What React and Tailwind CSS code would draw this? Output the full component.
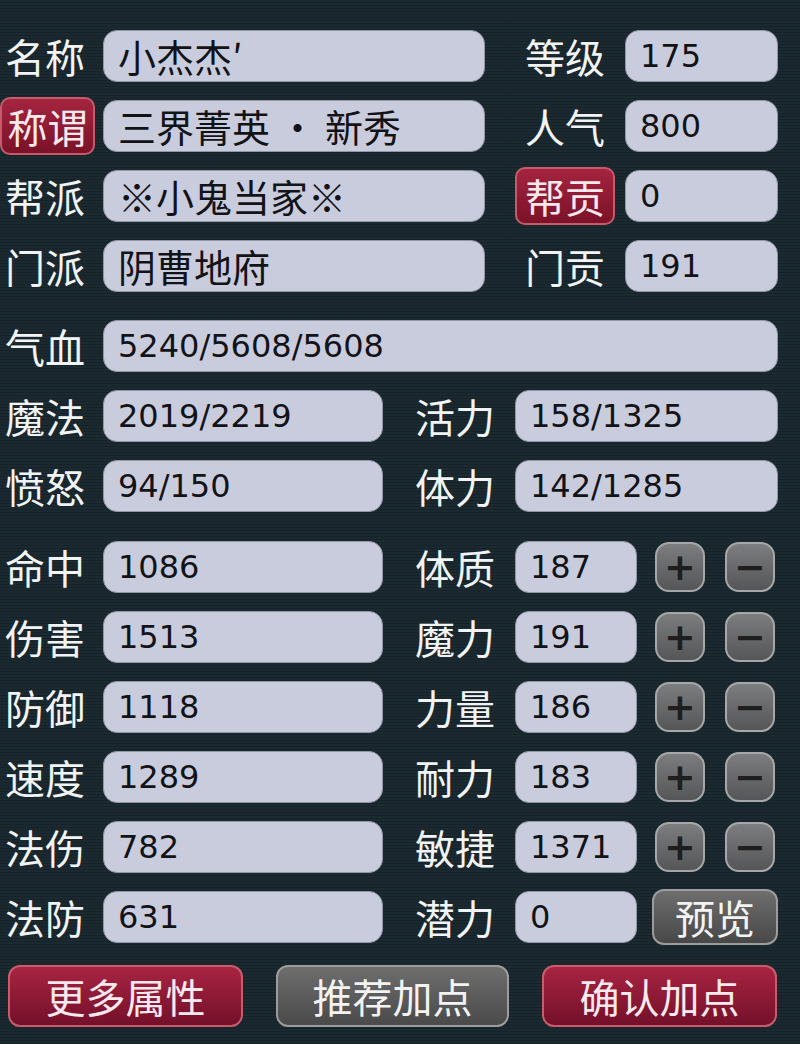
import React from 'react'

const cjk = { fontFamily: '"Noto Sans CJK SC", "Noto Sans", sans-serif' }
const num = { fontFamily: '"DejaVu Sans", "Noto Sans CJK SC", sans-serif' }

function Label({ text, className = '' }) {
  return (
    <div className={`text-[40px] leading-none text-[#f1f3f4] whitespace-nowrap ${className}`} style={cjk}>
      {text}
    </div>
  )
}

function Badge({ text, className = '' }) {
  return (
    <div
      className={`flex items-center justify-center h-[58px] rounded-[10px] border-2 border-[#c65a6a] bg-gradient-to-b from-[#a52440] to-[#7a1228] text-[40px] leading-none text-[#fbe8ec] ${className}`}
      style={cjk}
    >
      {text}
    </div>
  )
}

function Field({ value, className = '', zh = false }) {
  return (
    <div
      className={`flex items-center h-[52px] rounded-[14px] border border-[#9297a8] bg-[#c9ccdd] pl-[14px] text-[#121316] whitespace-nowrap ${zh ? 'text-[38px]' : 'text-[32px]'} leading-none ${className}`}
      style={zh ? cjk : num}
    >
      {value}
    </div>
  )
}

function PlusMinus({ sign }) {
  return (
    <div className="flex items-center justify-center w-[50px] h-[50px] rounded-[14px] border-2 border-[#a5a7a8] bg-gradient-to-b from-[#7c7d7e] to-[#545657] text-[38px] leading-none font-bold text-[#1e1e1e]" style={num}>
      {sign}
    </div>
  )
}

function GameButton({ text, red }) {
  return (
    <div
      className={`flex items-center justify-center h-[62px] rounded-[12px] border-2 text-[40px] leading-none ${
        red
          ? 'border-[#c85c6c] bg-gradient-to-b from-[#a82442] to-[#74102a] text-[#fbe9ee]'
          : 'border-[#9c9c9c] bg-gradient-to-b from-[#6e6e6e] to-[#4a4a4a] text-[#f3f3f3]'
      }`}
      style={cjk}
    >
      {text}
    </div>
  )
}

const topRows = [
  { label: '名称', value: '小杰杰′', rLabel: '等级', rValue: '175' },
  { label: '称谓', value: '三界菁英 · 新秀', rLabel: '人气', rValue: '800', badge: true },
  { label: '帮派', value: '※小鬼当家※', rLabel: '帮贡', rValue: '0', rBadge: true },
  { label: '门派', value: '阴曹地府', rLabel: '门贡', rValue: '191' },
]

const statRows = [
  { label: '命中', value: '1086', rLabel: '体质', rValue: '187' },
  { label: '伤害', value: '1513', rLabel: '魔力', rValue: '191' },
  { label: '防御', value: '1118', rLabel: '力量', rValue: '186' },
  { label: '速度', value: '1289', rLabel: '耐力', rValue: '183' },
  { label: '法伤', value: '782', rLabel: '敏捷', rValue: '1371' },
]

export default function App() {
  return (
    <div className="w-[800px] h-[1044px] overflow-hidden bg-[#1b2a31] bg-[repeating-linear-gradient(0deg,rgba(0,0,0,0.18)_0px,rgba(0,0,0,0.18)_1px,transparent_1px,transparent_3px)] pt-[30px]">
      {/* basic info */}
      <div className="flex flex-col gap-[18px]">
        {topRows.map(r => (
          <div key={r.label} className="flex items-center h-[52px]">
            {r.badge ? (
              <Badge text={r.label} className="w-[95px] mr-[3px]" />
            ) : (
              <Label text={r.label} className="w-[98px] pl-[5px]" />
            )}
            <Field value={r.value} zh className="ml-[5px] w-[382px]" />
            {r.rBadge ? (
              <div className="w-[140px] flex justify-start pl-[30px]">
                <Badge text={r.rLabel} className="w-[100px]" />
              </div>
            ) : (
              <div className="w-[140px] flex justify-end pr-[20px]">
                <Label text={r.rLabel} />
              </div>
            )}
            <Field value={r.rValue} className="w-[153px]" />
          </div>
        ))}
      </div>

      {/* hp / mp */}
      <div className="flex flex-col gap-[18px] mt-[28px]">
        <div className="flex items-center h-[52px]">
          <Label text="气血" className="w-[98px] pl-[5px]" />
          <Field value="5240/5608/5608" className="ml-[5px] w-[675px]" />
        </div>
        <div className="flex items-center h-[52px]">
          <Label text="魔法" className="w-[98px] pl-[5px]" />
          <Field value="2019/2219" className="ml-[5px] w-[280px]" />
          <Label text="活力" className="ml-[32px] w-[100px]" />
          <Field value="158/1325" className="w-[263px]" />
        </div>
        <div className="flex items-center h-[52px]">
          <Label text="愤怒" className="w-[98px] pl-[5px]" />
          <Field value="94/150" className="ml-[5px] w-[280px]" />
          <Label text="体力" className="ml-[32px] w-[100px]" />
          <Field value="142/1285" className="w-[263px]" />
        </div>
      </div>

      {/* attributes */}
      <div className="flex flex-col gap-[18px] mt-[29px]">
        {statRows.map(r => (
          <div key={r.label} className="flex items-center h-[52px]">
            <Label text={r.label} className="w-[98px] pl-[5px]" />
            <Field value={r.value} className="ml-[5px] w-[280px]" />
            <Label text={r.rLabel} className="ml-[32px] w-[100px]" />
            <Field value={r.rValue} className="w-[122px]" />
            <div className="ml-[18px] flex gap-[20px]">
              <PlusMinus sign="+" />
              <PlusMinus sign="−" />
            </div>
          </div>
        ))}
        <div className="flex items-center h-[52px]">
          <Label text="法防" className="w-[98px] pl-[5px]" />
          <Field value="631" className="ml-[5px] w-[280px]" />
          <Label text="潜力" className="ml-[32px] w-[100px]" />
          <Field value="0" className="w-[122px]" />
          <div className="ml-[15px] flex items-center justify-center w-[126px] h-[56px] rounded-[12px] border-2 border-[#9c9c9c] bg-gradient-to-b from-[#6e6e6e] to-[#484848] text-[40px] leading-none text-[#f3f3f3]" style={cjk}>
            预览
          </div>
        </div>
      </div>

      {/* actions */}
      <div className="grid grid-cols-[235px_233px_235px] gap-x-[33px] pl-[8px] mt-[22px]">
        <GameButton text="更多属性" red />
        <GameButton text="推荐加点" />
        <GameButton text="确认加点" red />
      </div>
    </div>
  )
}
